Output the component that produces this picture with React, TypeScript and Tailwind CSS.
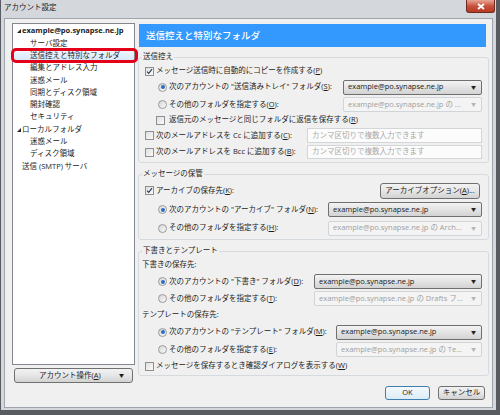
import { ReactNode } from "react";

function Checkbox({ checked = false }: { checked?: boolean }) {
  return (
    <span className="flex h-[9px] w-[9px] shrink-0 items-center justify-center border border-[#8f8f8f] bg-linear-to-br from-[#dedede] to-[#fbfbfb]">
      {checked && (
        <svg viewBox="0 0 8 8" className="h-[7px] w-[7px]">
          <path d="M1.2 4.2 L3.1 6.2 L6.9 1.4" fill="none" stroke="#2f3e5e" strokeWidth={1.3} />
        </svg>
      )}
    </span>
  );
}

function Radio({ checked = false }: { checked?: boolean }) {
  return (
    <span className="flex h-[9px] w-[9px] shrink-0 items-center justify-center rounded-full border border-[#9a9a9a] bg-linear-to-br from-[#d6d6d6] to-[#fafafa]">
      {checked && <span className="h-[4px] w-[4px] rounded-full bg-[#2c6cc0]" />}
    </span>
  );
}

function Combo({ text, width, disabled = false }: { text: string; width: string; disabled?: boolean }) {
  return (
    <div
      className={`ml-auto flex h-[15px] shrink-0 items-center rounded-[2px] border pl-[4px] pr-[5px] ${width} ${
        disabled
          ? "border-[#d2d5d8] bg-[#f4f4f4] text-[#a0a0a0]"
          : "border-[#6f6f6f] bg-linear-to-b from-[#f3f3f3] to-[#d3d3d3] text-[#1b1b1b]"
      }`}
    >
      <span className="flex-1 whitespace-nowrap">{text}</span>
      <span className={`text-[5px] ${disabled ? "text-[#b5b5b5]" : "text-[#222]"}`}>▼</span>
    </div>
  );
}

function TextBox({ height }: { height: string }) {
  return (
    <div className={`ml-auto flex w-[175px] shrink-0 items-center border border-[#d3d6d9] bg-[#fcfcfc] pl-[4px] text-[#a8a8a8] ${height}`}>
      カンマ区切りで複数入力できます
    </div>
  );
}

function WinButton({ children, className = "" }: { children: ReactNode; className?: string }) {
  return (
    <div
      className={`flex items-center rounded-[3px] border border-[#707070] bg-linear-to-b from-[#f2f2f2] via-[#e6e6e6] to-[#d2d2d2] text-[#1b1b1b] ${className}`}
    >
      {children}
    </div>
  );
}

function Row({ h, pl, children }: { h: string; pl: string; children: ReactNode }) {
  return <div className={`flex items-center gap-[2px] pr-[6px] ${h} ${pl}`}>{children}</div>;
}

function Group({ title, className = "", children }: { title: string; className?: string; children: ReactNode }) {
  return (
    <fieldset className={`min-w-0 rounded-[3px] border border-[#d5dadf] p-0 ${className}`}>
      <legend className="ml-[3px] px-[1px] pb-[3px] leading-[10px] text-[#1b1b1b]">{title}</legend>
      {children}
    </fieldset>
  );
}

function Triangle() {
  return (
    <svg viewBox="0 0 4 4" className="h-[4px] w-[4px]">
      <polygon points="4,0 4,4 0,4" fill="#262626" />
    </svg>
  );
}

const treeChildren = ["サーバ設定", "送信控えと特別なフォルダ", "編集とアドレス入力", "迷惑メール", "同期とディスク領域", "開封確認", "セキュリティ"];

export default function App() {
  return (
    <div className="flex h-[415px] w-[500px] flex-col overflow-hidden border-b-[5px] border-l border-r-[4px] border-[#585b5f] bg-[#d4d8dc] font-['Open_Sans','Noto_Sans_CJK_JP',sans-serif] text-[7.5px] leading-none text-[#1b1b1b]">
      <div className="flex h-[18px] shrink-0 items-start">
        <span className="pl-[3px] pt-[4px] text-[7.5px]">アカウント設定</span>
        <div className="ml-auto mr-[1px] flex h-[13px] w-[29px] items-center justify-center rounded-b-[3px] border border-t-0 border-[#6e2b22] bg-linear-to-b from-[#e7a595] via-[#c8513c] to-[#b63a22]">
          <svg viewBox="0 0 8 7" className="h-[7px] w-[8px]">
            <path d="M1 1 L7 6 M7 1 L1 6" stroke="#fff" strokeWidth={1.8} />
          </svg>
        </div>
      </div>

      <div className="ml-[3px] flex h-[390px] w-[489px] border border-[#9ea5ad] bg-[#f0f0f0] pl-[7px] pt-[4px]">
        {/* left: account tree */}
        <div className="flex w-[123px] shrink-0 flex-col">
          <div className="h-[342px] border border-[#828790] bg-white pt-[1px]">
            <div className="flex h-[12.3px] items-center gap-[1px] pl-[4px] font-bold">
              <Triangle />
              <span>example@po.synapse.ne.jp</span>
            </div>
            {treeChildren.map((label) =>
              label === "送信控えと特別なフォルダ" ? (
                <div key={label} className="relative flex h-[12.3px] items-center rounded-[2px] bg-linear-to-b from-[#f1f7fe] to-[#d3e6fb] pl-[17px]">
                  <span>{label}</span>
                  <div className="absolute -bottom-[1px] -left-[2px] -right-[4px] -top-[2px] rounded-[5px] border-[3px] border-[#e5001a]" />
                </div>
              ) : (
                <div key={label} className="flex h-[12.3px] items-center pl-[17px]">
                  {label}
                </div>
              )
            )}
            <div className="flex h-[12.3px] items-center gap-[1px] pl-[4px]">
              <Triangle />
              <span>ローカルフォルダ</span>
            </div>
            <div className="flex h-[12.3px] items-center pl-[17px]">迷惑メール</div>
            <div className="flex h-[12.3px] items-center pl-[17px]">ディスク領域</div>
            <div className="flex h-[12.3px] items-center pl-[9px]">送信 (SMTP) サーバ</div>
          </div>
          <WinButton className="mx-[2px] mt-[3px] h-[15px] pl-[24px] pr-[8px]">
            <span>
              アカウント操作(<u>A</u>)
            </span>
            <span className="ml-auto text-[5px]">▼</span>
          </WinButton>
        </div>

        {/* right: settings */}
        <div className="ml-[3px] flex w-[351px] shrink-0 flex-col">
          <div className="ml-[1px] mr-[3px] mt-[1px] flex h-[23px] items-center bg-[#3399ff] pl-[7px] text-[9.5px] font-medium text-white">
            送信控えと特別なフォルダ
          </div>

          <Group title="送信控え" className="mt-[4px] pb-[2px]">
            <Row h="h-[14px]" pl="pl-[6px]">
              <Checkbox checked />
              <span>
                メッセージ送信時に自動的にコピーを作成する(<u>P</u>)
              </span>
            </Row>
            <Row h="h-[18px]" pl="pl-[19px]">
              <Radio checked />
              <span>
                次のアカウントの "送信済みトレイ" フォルダ(<u>S</u>):
              </span>
              <Combo text="example@po.synapse.ne.jp" width="w-[139px]" />
            </Row>
            <Row h="h-[17px]" pl="pl-[19px]">
              <Radio />
              <span>
                その他のフォルダを指定する(<u>O</u>):
              </span>
              <Combo text="example@po.synapse.ne.jp の ..." width="w-[139px]" disabled />
            </Row>
            <Row h="h-[14px]" pl="pl-[17px]">
              <Checkbox />
              <span className="ml-[2px]">
                返信元のメッセージと同じフォルダに返信を保存する(<u>R</u>)
              </span>
            </Row>
            <Row h="h-[17px]" pl="pl-[6px]">
              <Checkbox />
              <span>
                次のメールアドレスを Cc に追加する(<u>C</u>):
              </span>
              <TextBox height="h-[15px]" />
            </Row>
            <Row h="h-[16px]" pl="pl-[6px]">
              <Checkbox />
              <span>
                次のメールアドレスを Bcc に追加する(<u>B</u>):
              </span>
              <TextBox height="h-[14px]" />
            </Row>
          </Group>

          <Group title="メッセージの保管" className="mt-[5px] pb-[2px]">
            <div className="flex h-[19px] items-center gap-[2px] pl-[6px] pr-[8px]">
              <Checkbox checked />
              <span>
                アーカイブの保存先(<u>K</u>):
              </span>
              <WinButton className="ml-auto h-[16px] w-[100px] justify-center">
                <span>
                  アーカイブオプション(<u>A</u>)...
                </span>
              </WinButton>
            </div>
            <Row h="h-[19px]" pl="pl-[19px]">
              <Radio checked />
              <span>
                次のアカウントの "アーカイブ" フォルダ(<u>N</u>):
              </span>
              <Combo text="example@po.synapse.ne.jp" width="w-[154px]" />
            </Row>
            <Row h="h-[18px]" pl="pl-[19px]">
              <Radio />
              <span>
                その他のフォルダを指定する(<u>H</u>):
              </span>
              <Combo text="example@po.synapse.ne.jp の Arch..." width="w-[154px]" disabled />
            </Row>
          </Group>

          <Group title="下書きとテンプレート" className="mt-[5px] pb-[1px]">
            <Row h="h-[14px]" pl="pl-[3px]">
              <span>下書きの保存先:</span>
            </Row>
            <Row h="h-[19px]" pl="pl-[19px]">
              <Radio checked />
              <span>
                次のアカウントの "下書き" フォルダ(<u>D</u>):
              </span>
              <Combo text="example@po.synapse.ne.jp" width="w-[168px]" />
            </Row>
            <Row h="h-[15px]" pl="pl-[19px]">
              <Radio />
              <span>
                その他のフォルダを指定する(<u>T</u>):
              </span>
              <Combo text="example@po.synapse.ne.jp の Drafts フ..." width="w-[168px]" disabled />
            </Row>
            <Row h="h-[17px]" pl="pl-[3px]">
              <span>テンプレートの保存先:</span>
            </Row>
            <Row h="h-[18px]" pl="pl-[19px]">
              <Radio checked />
              <span>
                次のアカウントの "テンプレート" フォルダ(<u>M</u>):
              </span>
              <Combo text="example@po.synapse.ne.jp" width="w-[146px]" />
            </Row>
            <Row h="h-[17px]" pl="pl-[19px]">
              <Radio />
              <span>
                その他のフォルダを指定する(<u>E</u>):
              </span>
              <Combo text="example@po.synapse.ne.jp の Te..." width="w-[146px]" disabled />
            </Row>
            <Row h="h-[16px]" pl="pl-[6px]">
              <Checkbox />
              <span>
                メッセージを保存するとき確認ダイアログを表示する(<u>W</u>)
              </span>
            </Row>
          </Group>

          <div className="mt-[10px] flex justify-end gap-[8px] pr-[4px]">
            <div className="flex h-[14px] w-[45px] items-center justify-center rounded-[3px] border border-[#3c7fb1] bg-linear-to-b from-[#f4f9fd] to-[#dcecf8]">
              OK
            </div>
            <WinButton className="h-[14px] w-[47px] justify-center">キャンセル</WinButton>
          </div>
        </div>
      </div>
    </div>
  );
}
